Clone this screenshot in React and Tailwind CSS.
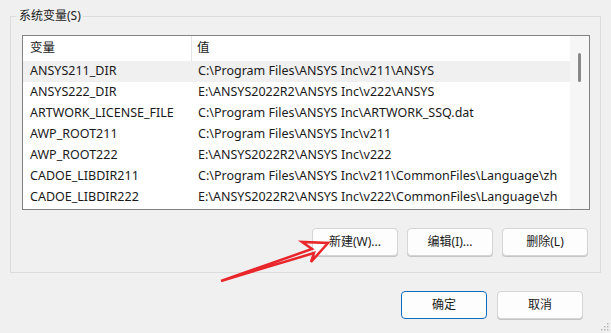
import React from "react";

const rows = [
  ["ANSYS211_DIR", "C:\\Program Files\\ANSYS Inc\\v211\\ANSYS"],
  ["ANSYS222_DIR", "E:\\ANSYS2022R2\\ANSYS Inc\\v222\\ANSYS"],
  ["ARTWORK_LICENSE_FILE", "C:\\Program Files\\ANSYS Inc\\ARTWORK_SSQ.dat"],
  ["AWP_ROOT211", "C:\\Program Files\\ANSYS Inc\\v211"],
  ["AWP_ROOT222", "E:\\ANSYS2022R2\\ANSYS Inc\\v222"],
  ["CADOE_LIBDIR211", "C:\\Program Files\\ANSYS Inc\\v211\\CommonFiles\\Language\\zh"],
  ["CADOE_LIBDIR222", "E:\\ANSYS2022R2\\ANSYS Inc\\v222\\CommonFiles\\Language\\zh"],
];

const font = {
  fontFamily: '"Segoe UI", "Noto Sans", "Noto Sans CJK SC", sans-serif',
};

function Btn({ children, primary, className = "" }) {
  return (
    <div
      className={
        "h-[28px] w-[86px] rounded-[4px] bg-[#fdfdfd] flex items-center justify-center text-[12px] text-[#1a1a1a] " +
        (primary ? "border border-[#0f6cbd]" : "border border-[#d5d5d5] shadow-[0_1px_0_#c4c4c4]") +
        " " +
        className
      }
    >
      {children}
    </div>
  );
}

export default function App() {
  return (
    <div
      className="relative w-[611px] h-[333px] bg-[#f0f0f0] overflow-hidden pt-[16px] px-[10px]"
      style={font}
    >
      {/* group box */}
      <div className="relative w-[591px] h-[257px] border border-[#dcdcdc] pt-[18px] pl-[11px]">
        <div className="absolute left-[6px] top-[-9px] px-[2px] bg-[#f0f0f0] text-[12px] leading-[16px] text-[#1a1a1a]">
          系统变量(S)
        </div>
        {/* list box */}
        <div className="w-[568px] h-[175px] border border-[#828282] bg-white flex">
          <div className="w-[547px] flex flex-col text-[12.5px] text-[#1a1a1a]">
            <div className="h-[25px] flex items-center">
              <div className="w-[169px] h-full pl-[7px] flex items-center border-r border-[#e5e5e5]">
                变量
              </div>
              <div className="pl-[5px]">值</div>
            </div>
            {rows.map(([k, v], i) => (
              <div
                key={k}
                className={
                  "h-[21px] flex items-center " + (i === 0 ? "bg-[#f0f0f0]" : "")
                }
              >
                <div className="w-[170px] pl-[7px] whitespace-nowrap">{k}</div>
                <div className="pl-[5px] whitespace-nowrap overflow-hidden">{v}</div>
              </div>
            ))}
          </div>
          <div className="flex-1 bg-[#f6f6f6] flex justify-center pt-[17px]">
            <div className="w-[3px] h-[29px] rounded-full bg-[#8a8a8a]" />
          </div>
        </div>
        {/* buttons */}
        <div className="flex justify-end gap-[9px] mt-[18px] pr-[12px]">
          <Btn>新建(W)...</Btn>
          <Btn>编辑(I)...</Btn>
          <Btn>删除(L)</Btn>
        </div>
      </div>
      <div className="flex justify-end gap-[10px] mt-[18px] pr-[18px]">
        <Btn primary>确定</Btn>
        <Btn>取消</Btn>
      </div>

      {/* red annotation arrow */}
      <svg
        className="absolute left-0 top-0 pointer-events-none"
        width="611"
        height="333"
      >
        <polygon
          points="221,281 312,249 302,242 328,243 311,262 314,253"
          fill="none"
          stroke="#e8262b"
          strokeWidth="2.5"
          strokeLinejoin="miter"
        />
      </svg>

      {/* resize grip */}
      <svg className="absolute right-[1px] bottom-[1px]" width="10" height="10">
        <rect x="7" y="1" width="1.5" height="1.5" fill="#b5b5b5" />
        <rect x="4" y="4" width="1.5" height="1.5" fill="#b5b5b5" />
        <rect x="7" y="4" width="1.5" height="1.5" fill="#b5b5b5" />
        <rect x="1" y="7" width="1.5" height="1.5" fill="#b5b5b5" />
        <rect x="4" y="7" width="1.5" height="1.5" fill="#b5b5b5" />
        <rect x="7" y="7" width="1.5" height="1.5" fill="#b5b5b5" />
      </svg>
    </div>
  );
}
